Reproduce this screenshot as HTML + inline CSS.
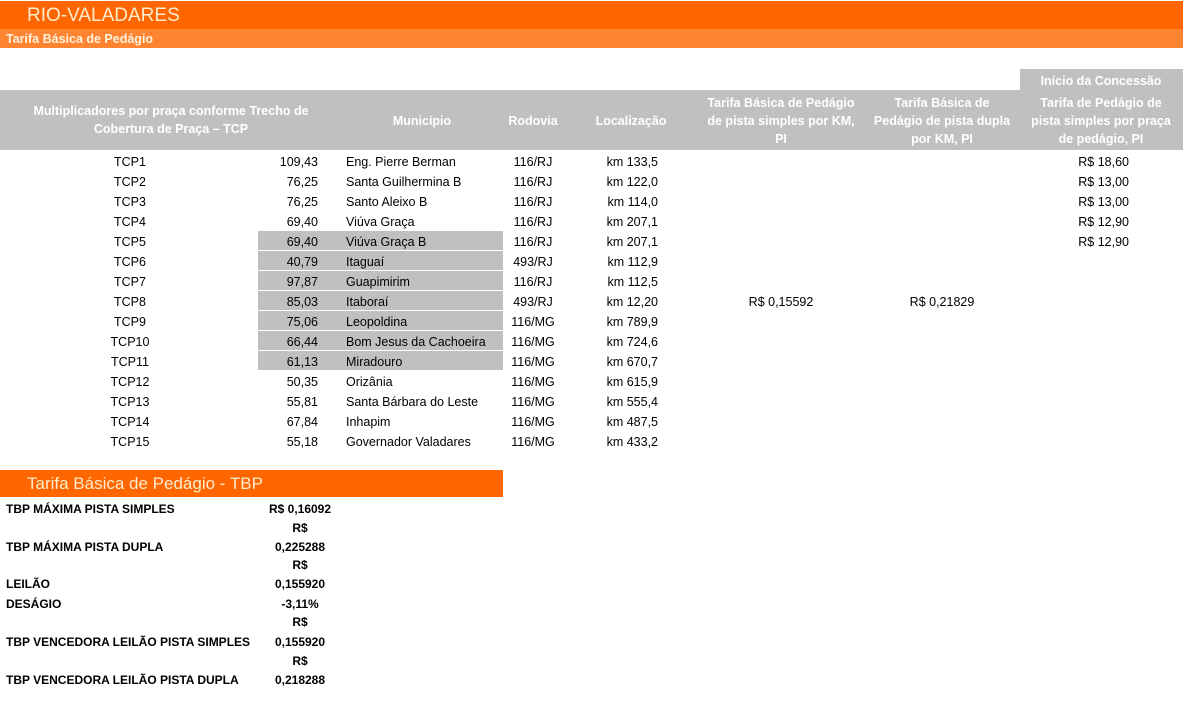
<!DOCTYPE html>
<html><head><meta charset="utf-8"><style>
body{margin:0;width:1185px;height:705px;background:#fff;position:relative;overflow:hidden;font-family:"Liberation Sans",sans-serif;font-size:12.5px;color:#000}
div{position:absolute;white-space:nowrap}
.c{transform:translateX(-50%);text-align:center}
.r{transform:translateX(-100%)}
.h{color:#fff;font-weight:bold;font-size:12.5px;text-align:center;line-height:18px;transform:translateX(-50%)}
.g{background:#c0c0c0;left:258px;width:245px;height:19px}
.b{font-weight:bold;font-size:12px}
</style></head><body>
<div style="left:0;top:1px;width:1183px;height:28px;background:#ff6600"></div>
<div style="left:27px;top:5px;font-size:19px;color:#ffeccc;line-height:22px">RIO-VALADARES</div>
<div style="left:0;top:29px;width:1183px;height:19px;background:#ff8431"></div>
<div style="left:6px;top:32px;font-size:12.5px;font-weight:bold;color:#fff2dd">Tarifa Básica de Pedágio</div>

<div style="left:1020px;top:69px;width:163px;height:21px;background:#c0c0c0"></div>
<div style="left:0;top:90px;width:1183px;height:60px;background:#c0c0c0"></div>
<div class="h" style="left:1101px;top:72px">Início da Concessão</div>
<div class="h" style="left:171px;top:102px">Multiplicadores por praça conforme Trecho de<br>Cobertura de Praça – TCP</div>
<div class="h" style="left:422px;top:112px">Município</div>
<div class="h" style="left:533px;top:112px">Rodovia</div>
<div class="h" style="left:631px;top:112px">Localização</div>
<div class="h" style="left:781px;top:94px">Tarifa Básica de Pedágio<br>de pista simples por KM,<br>PI</div>
<div class="h" style="left:942px;top:94px">Tarifa Básica de<br>Pedágio de pista dupla<br>por KM, PI</div>
<div class="h" style="left:1101px;top:94px">Tarifa de Pedágio de<br>pista simples por praça<br>de pedágio, PI</div>

<div class="g" style="top:231px"></div><div class="g" style="top:251px"></div><div class="g" style="top:271px"></div><div class="g" style="top:291px"></div><div class="g" style="top:311px"></div><div class="g" style="top:331px"></div><div class="g" style="top:351px"></div>

<div id="rows"></div>
<script>
var d=[["TCP1","109,43","Eng. Pierre Berman","116/RJ","km 133,5","R$ 18,60"],
["TCP2","76,25","Santa Guilhermina B","116/RJ","km 122,0","R$ 13,00"],
["TCP3","76,25","Santo Aleixo B","116/RJ","km 114,0","R$ 13,00"],
["TCP4","69,40","Viúva Graça","116/RJ","km 207,1","R$ 12,90"],
["TCP5","69,40","Viúva Graça B","116/RJ","km 207,1","R$ 12,90"],
["TCP6","40,79","Itaguaí","493/RJ","km 112,9",""],
["TCP7","97,87","Guapimirim","116/RJ","km 112,5",""],
["TCP8","85,03","Itaboraí","493/RJ","km 12,20",""],
["TCP9","75,06","Leopoldina","116/MG","km 789,9",""],
["TCP10","66,44","Bom Jesus da Cachoeira","116/MG","km 724,6",""],
["TCP11","61,13","Miradouro","116/MG","km 670,7",""],
["TCP12","50,35","Orizânia","116/MG","km 615,9",""],
["TCP13","55,81","Santa Bárbara do Leste","116/MG","km 555,4",""],
["TCP14","67,84","Inhapim","116/MG","km 487,5",""],
["TCP15","55,18","Governador Valadares","116/MG","km 433,2",""]];
var h="";
d.forEach(function(r,i){var t=155+i*20;
h+='<div class="c" style="left:130px;top:'+t+'px">'+r[0]+'</div>';
h+='<div class="r" style="left:318px;top:'+t+'px">'+r[1]+'</div>';
h+='<div style="left:346px;top:'+t+'px">'+r[2]+'</div>';
h+='<div class="c" style="left:533px;top:'+t+'px">'+r[3]+'</div>';
h+='<div class="r" style="left:658px;top:'+t+'px">'+r[4]+'</div>';
if(r[5])h+='<div class="r" style="left:1129px;top:'+t+'px">'+r[5]+'</div>';});
document.getElementById("rows").outerHTML=h;
</script>
<div class="c" style="left:781px;top:295px">R$ 0,15592</div>
<div class="c" style="left:942px;top:295px">R$ 0,21829</div>

<div style="left:0;top:470px;width:503px;height:27px;background:#ff6600"></div>
<div style="left:27px;top:474px;font-size:17px;color:#ffeccc">Tarifa Básica de Pedágio - TBP</div>

<div class="b" style="left:6px;top:502px">TBP MÁXIMA PISTA SIMPLES</div>
<div class="b c" style="left:300px;top:502px">R$ 0,16092</div>
<div class="b c" style="left:300px;top:521px">R$</div>
<div class="b" style="left:6px;top:540px">TBP MÁXIMA PISTA DUPLA</div>
<div class="b c" style="left:300px;top:540px">0,225288</div>
<div class="b c" style="left:300px;top:558px">R$</div>
<div class="b" style="left:6px;top:577px">LEILÃO</div>
<div class="b c" style="left:300px;top:577px">0,155920</div>
<div class="b" style="left:6px;top:597px">DESÁGIO</div>
<div class="b c" style="left:300px;top:597px">-3,11%</div>
<div class="b c" style="left:300px;top:615px">R$</div>
<div class="b" style="left:6px;top:635px">TBP VENCEDORA LEILÃO PISTA SIMPLES</div>
<div class="b c" style="left:300px;top:635px">0,155920</div>
<div class="b c" style="left:300px;top:654px">R$</div>
<div class="b" style="left:6px;top:673px">TBP VENCEDORA LEILÃO PISTA DUPLA</div>
<div class="b c" style="left:300px;top:673px">0,218288</div>
</body></html>
